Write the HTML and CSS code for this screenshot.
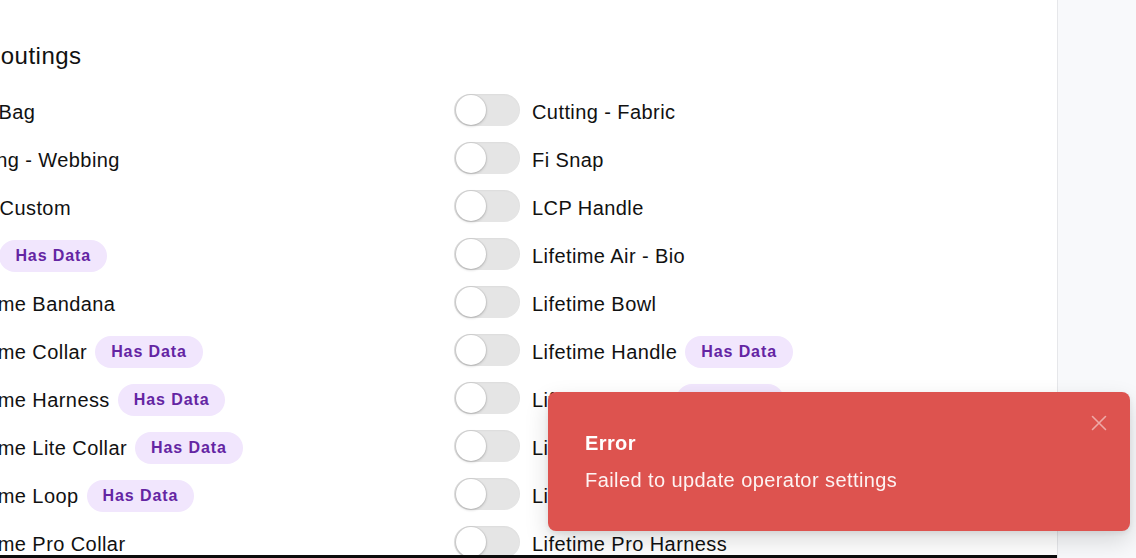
FILE: index.html
```html
<!DOCTYPE html>
<html lang="en">
<head>
<meta charset="utf-8">
<title>Operator Routings</title>
<link rel="stylesheet" href="styles.css">
</head>
<body>
<div class="app">
  <main class="main">
    <section class="section">
      <h2 class="title">Operator Routings</h2>
      <div class="grid">
        <div class="row"><span class="toggle"><span class="knob"></span></span><span class="label"><span class="name">Cart Bag</span></span></div>
        <div class="row"><span class="toggle"><span class="knob"></span></span><span class="label"><span class="name">Cutting - Fabric</span></span></div>
        <div class="row"><span class="toggle"><span class="knob"></span></span><span class="label"><span class="name">Cutting - Webbing</span></span></div>
        <div class="row"><span class="toggle"><span class="knob"></span></span><span class="label"><span class="name">Fi Snap</span></span></div>
        <div class="row"><span class="toggle"><span class="knob"></span></span><span class="label"><span class="name">Fold Custom</span></span></div>
        <div class="row"><span class="toggle"><span class="knob"></span></span><span class="label"><span class="name">LCP Handle</span></span></div>
        <div class="row"><span class="toggle"><span class="knob"></span></span><span class="label"><span class="name">Lids</span><span class="badge">Has Data</span></span></div>
        <div class="row"><span class="toggle"><span class="knob"></span></span><span class="label"><span class="name">Lifetime Air - Bio</span></span></div>
        <div class="row"><span class="toggle"><span class="knob"></span></span><span class="label"><span class="name">Lifetime Bandana</span></span></div>
        <div class="row"><span class="toggle"><span class="knob"></span></span><span class="label"><span class="name">Lifetime Bowl</span></span></div>
        <div class="row"><span class="toggle"><span class="knob"></span></span><span class="label"><span class="name">Lifetime Collar</span><span class="badge">Has Data</span></span></div>
        <div class="row"><span class="toggle"><span class="knob"></span></span><span class="label"><span class="name">Lifetime Handle</span><span class="badge">Has Data</span></span></div>
        <div class="row"><span class="toggle"><span class="knob"></span></span><span class="label"><span class="name">Lifetime Harness</span><span class="badge">Has Data</span></span></div>
        <div class="row"><span class="toggle"><span class="knob"></span></span><span class="label"><span class="name">Lifetime Leash</span><span class="badge">Has Data</span></span></div>
        <div class="row"><span class="toggle"><span class="knob"></span></span><span class="label"><span class="name">Lifetime Lite Collar</span><span class="badge">Has Data</span></span></div>
        <div class="row"><span class="toggle"><span class="knob"></span></span><span class="label"><span class="name">Lifetime Lite Harness</span></span></div>
        <div class="row"><span class="toggle"><span class="knob"></span></span><span class="label"><span class="name">Lifetime Loop</span><span class="badge">Has Data</span></span></div>
        <div class="row"><span class="toggle"><span class="knob"></span></span><span class="label"><span class="name">Lifetime Mini Bowl</span></span></div>
        <div class="row"><span class="toggle"><span class="knob"></span></span><span class="label"><span class="name">Lifetime Pro Collar</span></span></div>
        <div class="row"><span class="toggle"><span class="knob"></span></span><span class="label"><span class="name">Lifetime Pro Harness</span></span></div>
      </div>
    </section>
  </main>
  <aside class="side"></aside>
</div>

<div class="toast" role="alert">
  <div class="toast-title">Error</div>
  <div class="toast-msg">Failed to update operator settings</div>
  <button class="toast-close" aria-label="Close">
    <svg width="16" height="16" viewBox="0 0 16 16" fill="none" stroke="currentColor" stroke-width="1.6" stroke-linecap="round"><path d="M1.5 1.5 L14.5 14.5 M14.5 1.5 L1.5 14.5"/></svg>
  </button>
</div>
</body>
</html>
```
FILE: styles.css
```css
* { box-sizing: border-box; }
html, body { margin: 0; padding: 0; }
body {
  font-family: "Liberation Sans", Arial, Helvetica, sans-serif;
  color: #111111;
  background: #ffffff;
  overflow: hidden;
}
.app {
  display: flex;
  height: 558px;
}
.main {
  width: 1058px;
  flex: none;
  overflow: hidden;
  border-right: 1px solid #e6e7ea;
  background: #fff;
  position: relative;
}
.main::after {
  content: "";
  position: absolute;
  left: 0;
  right: 0;
  bottom: 0;
  height: 3px;
  background: #0c0c0c;
}
.side {
  flex: 1;
  background: #f8f9fb;
}
.section {
  margin-left: -125px;
  padding-top: 40px;
}
.title {
  margin: 0 0 22px;
  padding-left: 2px;
  font-size: 24px;
  line-height: 32px;
  font-weight: 400;
  letter-spacing: 0.5px;
  white-space: nowrap;
}
.grid {
  display: grid;
  grid-template-columns: 579px 579px;
  row-gap: 16px;
}
.row {
  display: flex;
  align-items: center;
  gap: 12px;
  height: 32px;
}
.toggle {
  position: relative;
  flex: none;
  width: 66px;
  height: 32px;
  border-radius: 16px;
  background: #e5e5e5;
  box-shadow: inset 0 1px 2px rgba(0,0,0,0.04);
}
.knob {
  position: absolute;
  left: 2px;
  top: 1px;
  width: 30px;
  height: 30px;
  border-radius: 50%;
  background: #fff;
  box-shadow: 0 1px 3px rgba(0,0,0,0.22), 0 0 0 1px rgba(0,0,0,0.05);
}
.label {
  display: flex;
  align-items: center;
  gap: 8px;
  margin-top: 4px;
  white-space: nowrap;
}
.name {
  font-size: 20px;
  line-height: 32px;
  letter-spacing: 0.42px;
}
.badge {
  display: inline-flex;
  align-items: center;
  height: 32px;
  padding: 0 16px;
  border-radius: 16px;
  background: #f1e6fd;
  color: #6425a3;
  font-size: 16px;
  font-weight: 700;
  letter-spacing: 0.9px;
  line-height: 32px;
}
.toast {
  position: fixed;
  left: 548px;
  top: 392px;
  width: 582px;
  height: 139px;
  padding: 37px 37px 0;
  background: #dd534f;
  border-radius: 8px;
  color: #fff;
  box-shadow: 0 10px 24px rgba(0,0,0,0.14), 0 2px 6px rgba(0,0,0,0.08);
}
.toast-title {
  font-size: 20px;
  line-height: 28px;
  font-weight: 700;
  letter-spacing: 0.4px;
}
.toast-msg {
  margin-top: 9px;
  font-size: 20px;
  line-height: 28px;
  letter-spacing: 0.42px;
  color: rgba(255,255,255,0.93);
}
.toast-close {
  position: absolute;
  right: 23px;
  top: 23px;
  width: 16px;
  height: 16px;
  padding: 0;
  border: 0;
  background: none;
  color: rgba(255,255,255,0.5);
  cursor: pointer;
  display: block;
}
.toast-close svg { display: block; }
```
